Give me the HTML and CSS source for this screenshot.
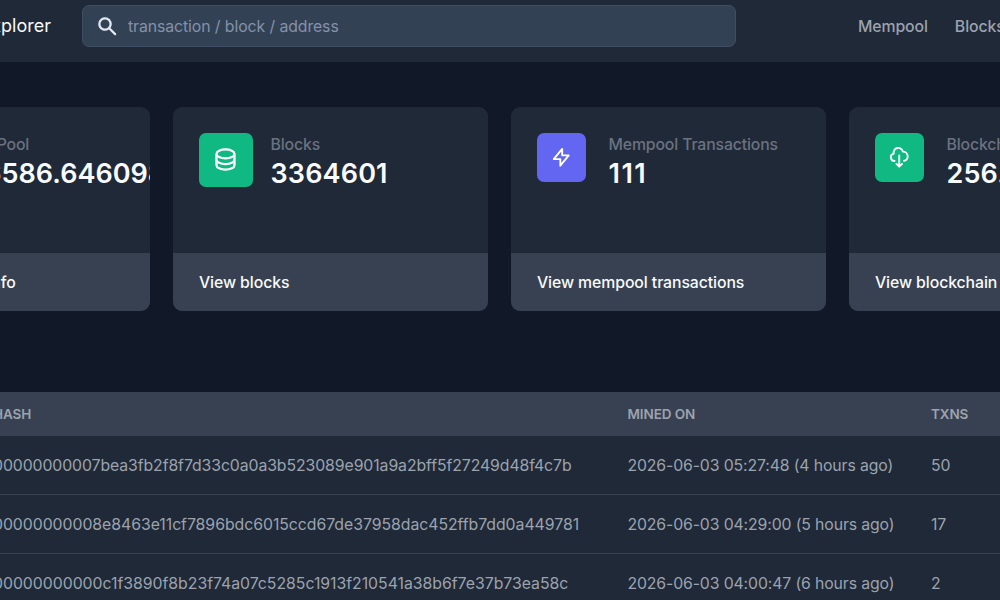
FILE: index.html
```html
<!DOCTYPE html>
<html lang="en">
<head>
  <meta charset="UTF-8">
  <meta name="viewport" content="width=device-width, initial-scale=1">
  <title>Explorer</title>
  <link rel="stylesheet" href="styles.css">
</head>
<body>

<header class="navbar">
  <a class="brand">Explorer</a>
  <div class="search">
    <svg class="search-icon" viewBox="0 0 20 20" fill="currentColor">
      <path fill-rule="evenodd" clip-rule="evenodd" d="M8 4a4 4 0 100 8 4 4 0 000-8zM2 8a6 6 0 1110.89 3.476l4.817 4.817a1 1 0 01-1.414 1.414l-4.816-4.816A6 6 0 012 8z"/>
    </svg>
    <input type="text" class="search-input" placeholder="transaction / block / address">
  </div>
  <nav class="nav-links">
    <a>Mempool</a>
    <a>Blocks</a>
  </nav>
</header>

<main>
  <div class="cards">
    <div class="card">
      <div class="card-body">
        <div class="icon icon-lg indigo"></div>
        <div class="stat">
          <p class="label">Orchard Pool</p>
          <p class="value value-long">2036586.646098</p>
        </div>
      </div>
      <div class="card-footer"><a>View blockchain info</a></div>
    </div>

    <div class="card">
      <div class="card-body">
        <div class="icon icon-lg green">
          <svg viewBox="0 0 24 24">
            <path d="M4 7v10c0 2.21 3.582 4 8 4s8-1.79 8-4V7M4 7c0 2.21 3.582 4 8 4s8-1.79 8-4M4 7c0-2.21 3.582-4 8-4s8 1.79 8 4m0 5c0 2.21-3.582 4-8 4s-8-1.79-8-4"/>
          </svg>
        </div>
        <div class="stat">
          <p class="label">Blocks</p>
          <p class="value">3364601</p>
        </div>
      </div>
      <div class="card-footer"><a>View blocks</a></div>
    </div>

    <div class="card">
      <div class="card-body">
        <div class="icon indigo">
          <svg viewBox="0 0 24 24">
            <path d="M13 10V3L4 14h7v7l9-11h-7z"/>
          </svg>
        </div>
        <div class="stat">
          <p class="label">Mempool Transactions</p>
          <p class="value value-short">111</p>
        </div>
      </div>
      <div class="card-footer"><a>View mempool transactions</a></div>
    </div>

    <div class="card">
      <div class="card-body">
        <div class="icon green">
          <svg viewBox="0 0 24 24">
            <path d="M7 16a4 4 0 01-.88-7.903A5 5 0 1115.9 6L16 6a5 5 0 011 9.9M9 19l3 3m0 0l3-3m-3 3V10"/>
          </svg>
        </div>
        <div class="stat">
          <p class="label">Blockchain Size</p>
          <p class="value">256.4 GB</p>
        </div>
      </div>
      <div class="card-footer"><a>View blockchain info</a></div>
    </div>
  </div>

  <table class="blocks">
    <thead>
      <tr>
        <th class="col-hash">Hash</th>
        <th class="col-mined">Mined on</th>
        <th>Txns</th>
      </tr>
    </thead>
    <tbody>
      <tr>
        <td class="hash">00000000007bea3fb2f8f7d33c0a0a3b523089e901a9a2bff5f27249d48f4c7b</td>
        <td>2026-06-03 05:27:48 (4 hours ago)</td>
        <td>50</td>
      </tr>
      <tr>
        <td class="hash">00000000008e8463e11cf7896bdc6015ccd67de37958dac452ffb7dd0a449781</td>
        <td>2026-06-03 04:29:00 (5 hours ago)</td>
        <td>17</td>
      </tr>
      <tr>
        <td class="hash">00000000000c1f3890f8b23f74a07c5285c1913f210541a38b6f7e37b73ea58c</td>
        <td>2026-06-03 04:00:47 (6 hours ago)</td>
        <td>2</td>
      </tr>
    </tbody>
  </table>
</main>

</body>
</html>
```

FILE: styles.css
```css
* {
  box-sizing: border-box;
}
html {
  overflow: hidden;
}
body {
  margin: 0;
  height: 600px;
  overflow: hidden;
  background: #111827;
  color: #f8fafc;
  font-family: Inter, "Liberation Sans", sans-serif;
  font-size: 15.8px;
}
p {
  margin: 0;
}
.navbar {
  display: flex;
  align-items: flex-start;
  height: 62px;
  padding-top: 5px;
  overflow: hidden;
  background: #1f2937;
}
.brand {
  display: flex;
  justify-content: flex-end;
  flex-shrink: 0;
  width: 51px;
  margin-right: 31px;
  font-size: 18px;
  line-height: 42px;
}
.search {
  display: flex;
  align-items: center;
  flex-shrink: 0;
  width: 654px;
  height: 42px;
  padding-left: 13px;
  background: #334155;
  border: 1px solid #3f4e63;
  border-radius: 7px;
}
.search-icon {
  width: 22.5px;
  height: 22.5px;
  color: #e2e8f0;
}
.search-input {
  flex: 1;
  padding: 0 0 0 9.5px;
  background: transparent;
  border: none;
  outline: none;
  color: #fff;
  font: inherit;
  letter-spacing: -0.08px;
}
.search-input::placeholder {
  color: #8492a8;
}
.nav-links {
  display: flex;
  flex-shrink: 0;
  gap: 27px;
  margin-left: 122px;
  color: #9ca3af;
  font-weight: 500;
  letter-spacing: -0.1px;
  line-height: 43px;
}

/* stat cards */
.cards {
  display: grid;
  grid-template-columns: repeat(4, 315.5px);
  gap: 22.5px;
  width: 1330px;
  margin: 44.5px 0 0 -165.5px;
}
.card {
  height: 204.5px;
  background: #1f2937;
  border-radius: 9px;
  overflow: hidden;
}
.card-body {
  display: flex;
  align-items: flex-start;
  height: 146.5px;
  padding: 26.5px 0 0 26.5px;
}
.icon {
  display: flex;
  align-items: center;
  justify-content: center;
  flex-shrink: 0;
  width: 49px;
  height: 49px;
  margin-right: 22.5px;
  border-radius: 7px;
}
.icon-lg {
  width: 53.5px;
  height: 53.5px;
  margin-right: 18px;
}
.icon svg {
  width: 22.5px;
  height: 22.5px;
  fill: none;
  stroke: #fff;
  stroke-width: 2;
  stroke-linecap: round;
  stroke-linejoin: round;
}
.icon-lg svg {
  width: 27px;
  height: 27px;
}
.green {
  background: #10b981;
}
.indigo {
  background: #6366f1;
}
.stat {
  white-space: nowrap;
}
.label {
  padding-top: 1px;
  color: #6b7280;
  font-weight: 500;
  letter-spacing: -0.14px;
  line-height: 21.5px;
}
.value {
  font-size: 27px;
  font-weight: 600;
  letter-spacing: 0.15px;
  line-height: 36px;
}
.value-short {
  letter-spacing: 1.5px;
}
.value-long {
  letter-spacing: 0;
}
.card-footer {
  height: 58px;
  padding-left: 26.5px;
  background: #374151;
  font-weight: 500;
  letter-spacing: -0.08px;
  line-height: 59px;
  white-space: nowrap;
}

/* latest blocks */
.blocks {
  table-layout: fixed;
  width: 1200px;
  margin: 80.5px 0 0 -34px;
  background: #1f2937;
  border-collapse: separate;
  border-spacing: 0;
  color: #9ca3af;
}
.blocks th,
.blocks td {
  padding: 0 0 0 27px;
  text-align: left;
  white-space: nowrap;
}
.blocks th {
  height: 44px;
  background: #374151;
  font-size: 13.5px;
  font-weight: 600;
  letter-spacing: -0.1px;
  text-transform: uppercase;
}
.blocks td {
  height: 59px;
  padding-top: 1px;
  border-bottom: 1px solid #374151;
  letter-spacing: -0.12px;
}
.blocks .hash {
  letter-spacing: -0.03px;
}
.blocks tr:first-child .hash {
  letter-spacing: -0.08px;
}
.blocks tr:last-child .hash {
  letter-spacing: -0.01px;
}
.col-hash {
  width: 634.5px;
}
.col-mined {
  width: 303.5px;
}
```
